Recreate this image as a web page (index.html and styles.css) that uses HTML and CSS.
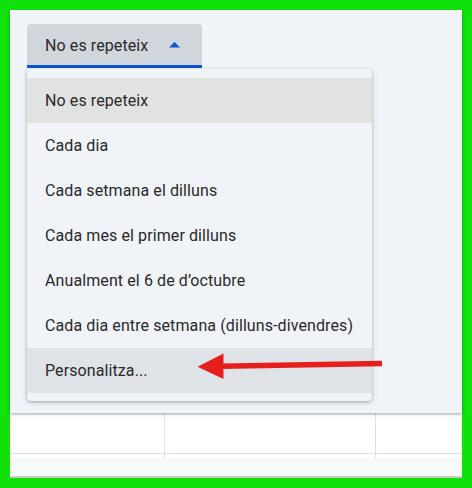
FILE: index.html
```html
<!DOCTYPE html>
<html lang="ca">
<head>
<meta charset="utf-8">
<title>Repetició</title>
<link rel="stylesheet" href="styles.css">
</head>
<body>
<div class="frame">
  <div class="screen">
    <div class="top">
      <div class="dropdown">
        <button class="select" type="button">
          <span class="select-label">No es repeteix</span>
          <svg class="caret" width="11" height="6" viewBox="0 0 11 6"><path d="M0 5.5 L5.5 0 L11 5.5 Z" fill="#0b57d0"/></svg>
        </button>
        <ul class="menu">
          <li class="item selected">No es repeteix</li>
          <li class="item">Cada dia</li>
          <li class="item">Cada setmana el dilluns</li>
          <li class="item">Cada mes el primer dilluns</li>
          <li class="item">Anualment el 6 de d’octubre</li>
          <li class="item">Cada dia entre setmana (dilluns-divendres)</li>
          <li class="item hover">Personalitza...</li>
        </ul>
      </div>
      <svg class="arrow" width="192" height="32" viewBox="196 350 192 32">
        <line x1="220" y1="366.2" x2="382" y2="363.6" stroke="#e61e1e" stroke-width="5.5"/>
        <polygon points="197.5,366.8 223.5,353.5 223.5,379" fill="#e61e1e"/>
      </svg>
    </div>
    <div class="grid-row">
      <div class="cell c1"></div>
      <div class="cell c2"></div>
      <div class="cell c3"></div>
    </div>
    <div class="grid-row short">
      <div class="cell c1"></div>
      <div class="cell c2"></div>
      <div class="cell c3"></div>
    </div>
    <div class="strip"></div>
  </div>
</div>
</body>
</html>
```

FILE: styles.css
```css
* { box-sizing: border-box; }
html, body { margin: 0; padding: 0; }
body {
  background: #10e10a;
  font-family: Roboto, "Noto Sans", sans-serif;
  color: #2a2a2a;
}
.frame {
  width: 472px;
  height: 488px;
  padding: 10px;
  background: #10e10a;
}
.screen {
  width: 452px;
  height: 468px;
  display: flex;
  flex-direction: column;
  background: #ffffff;
}
.top {
  position: relative;
  z-index: 1;
  height: 403px;
  flex: none;
  background: #f0f4f9;
  padding: 14px 17px;
  box-shadow: 0 1px 2px rgba(60, 64, 67, 0.35), 0 2px 4px rgba(60, 64, 67, 0.15);
}
.dropdown {
  position: relative;
  width: 175px;
}
.select {
  display: flex;
  align-items: center;
  justify-content: space-between;
  width: 175px;
  height: 44px;
  padding: 0 22px 0 18px;
  margin: 0;
  border: none;
  border-bottom: 3px solid #0b57d0;
  border-radius: 4px 4px 0 0;
  background: #d1d5dc;
  font-family: Roboto, "Noto Sans", sans-serif;
  font-size: 16px;
  letter-spacing: 0.1px;
  color: #2a2a2a;
}
.select-label { padding-top: 2px; }
.caret { display: block; }
.menu {
  position: absolute;
  left: 0;
  top: 45px;
  width: 345px;
  margin: 0;
  padding: 9px 0 8px;
  list-style: none;
  background: #f0f3f8;
  border-radius: 4px;
  box-shadow: 0 1px 3px rgba(60, 64, 67, 0.35), 0 2px 6px rgba(60, 64, 67, 0.15);
}
.item {
  height: 45px;
  display: flex;
  align-items: center;
  padding: 0 18px;
  font-size: 16px;
  letter-spacing: 0.1px;
  color: #2a2a2a;
}
.item.selected { background: #e1e3e1; }
.item.hover { background: #dfe2e7; }
.arrow {
  position: absolute;
  left: 186px;
  top: 340px;
  display: block;
}
.grid-row {
  display: flex;
  height: 41px;
  flex: none;
  border-bottom: 1px solid #dde1e6;
  background: #ffffff;
}
.grid-row.short {
  height: 4px;
  border-bottom: none;
}
.cell { height: 100%; }
.c1 { width: 155px; border-right: 1px solid #dde1e6; }
.c2 { width: 211px; border-right: 1px solid #dde1e6; }
.c3 { flex: 1; }
.strip {
  flex: 1;
  background: #f8f9fb;
  border-bottom: 2px solid #c9cbc4;
}
```
